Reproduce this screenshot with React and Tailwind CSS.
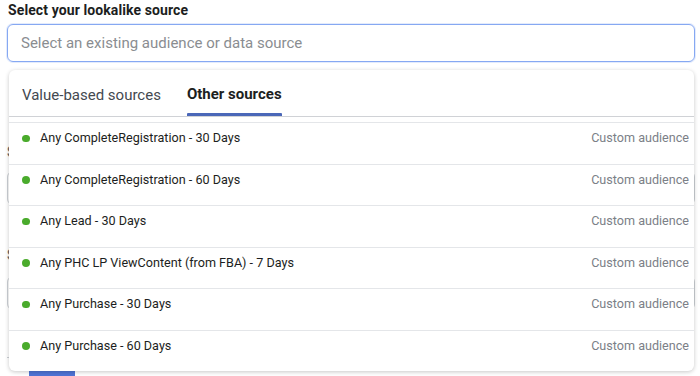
const rows = [
  "Any CompleteRegistration - 30 Days",
  "Any CompleteRegistration - 60 Days",
  "Any Lead - 30 Days",
  "Any PHC LP ViewContent (from FBA) - 7 Days",
  "Any Purchase - 30 Days",
  "Any Purchase - 60 Days",
];

export default function App() {
  return (
    <div className="relative h-[376px] w-[700px] overflow-hidden bg-white font-['Roboto',sans-serif] text-[#1c1e21]">
      <div className="px-[7px] pt-[1px]">
        <div className="pl-[1px] text-[14px] font-bold leading-[18px] tracking-[0.1px]">Select your lookalike source</div>
        <div className="mt-[5px] flex h-[38px] w-[688px] items-center rounded-[6px] border-[1.5px] border-[#86a8f2] px-[13px] pt-[1px] shadow-[0_0_0_1px_#e3ebfc]">
          <span className="text-[15px] text-[#8a8d91]">Select an existing audience or data source</span>
        </div>
        <div className="mt-[80px] text-[14px] font-bold text-[#606770]">Select audience location</div>
        <div className="mt-[8px] h-[34px] w-[688px] rounded-[6px] border border-[#ccd0d5]"></div>
        <div className="mt-[40px] text-[14px] font-bold text-[#606770]">Select audience size</div>
        <div className="mt-[10px] h-[34px] w-[688px] rounded-[6px] border border-[#ccd0d5]"></div>
        <div className="mt-[47px] flex h-[30px] w-[140px] border-t border-[#ccd0d5]">
          <div className="ml-[22px] h-full w-[46px] rounded-t-[2px] bg-[#4f74d6]"></div>
        </div>
      </div>

      <div className="absolute left-[9px] top-[70px] w-[685px] overflow-hidden rounded-[6px] bg-white shadow-[0_1px_4px_rgba(0,0,0,0.22)]">
        <div className="flex h-[47px] items-end border-b border-[#d0d2d6] pl-[4px]">
          <div className="flex h-full items-center px-[9px] pt-[5px] text-[15px] text-[#444950]">Value-based sources</div>
          <div className="ml-[13px] flex h-full flex-col px-[4px]">
            <div className="flex flex-1 items-center pt-[5px] text-[15px] font-bold text-[#1c1e21]">Other sources</div>
            <div className="h-[3px] rounded-t-[1px] bg-[#4a67b8]"></div>
          </div>
        </div>
        <div className="h-[5px]"></div>
        {rows.map((r) => (
          <div key={r} className="flex h-[41.5px] items-start border-t border-[#e4e6e9] pl-[13px] pr-[5px] pt-[6px]">
            <span className="mt-[5.5px] h-[7.5px] w-[7.5px] rounded-full bg-[#4aab2c]"></span>
            <span className="ml-[10.5px] flex-1 text-[12.6px] leading-[18px]">{r}</span>
            <span className="text-[12.6px] leading-[18px] text-[#7b8087]">Custom audience</span>
          </div>
        ))}
      </div>
    </div>
  );
}
